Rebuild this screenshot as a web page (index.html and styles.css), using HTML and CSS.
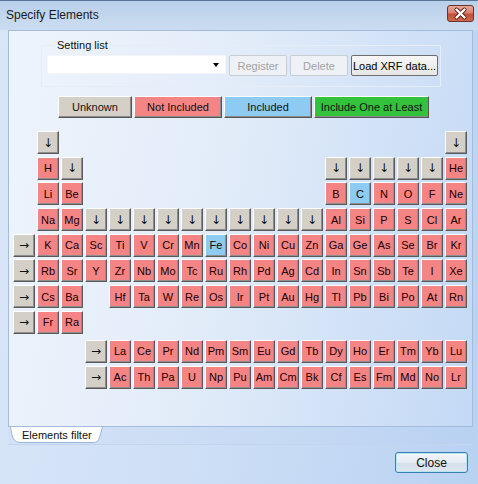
FILE: index.html
```html
<!DOCTYPE html>
<html>
<head>
<meta charset="utf-8">
<link rel="stylesheet" href="styles.css">
</head>
<body>
<div class="window">
  <div class="titlebar">
    <span class="title">Specify Elements</span>
    <span class="xbtn"><svg width="27" height="17" viewBox="0 0 27 17"><path d="M9.5 4.5 L17.5 12.5 M17.5 4.5 L9.5 12.5" stroke="#5a1c14" stroke-width="4" stroke-linecap="round"/><path d="M9.5 4.5 L17.5 12.5 M17.5 4.5 L9.5 12.5" stroke="#ffffff" stroke-width="2.4" stroke-linecap="round"/></svg></span>
  </div>
  <div class="page">
    <fieldset class="group">
      <legend>Setting list</legend>
      <div class="combo"><span class="caret"></span></div>
      <button class="btn dis w58">Register</button>
      <button class="btn dis w58">Delete</button>
      <button class="btn load">Load XRF data...</button>
    </fieldset>
    <div class="legendrow">
      <span class="lg gray l1">Unknown</span>
      <span class="lg red l2">Not Included</span>
      <span class="lg blue l2">Included</span>
      <span class="lg green l3">Include One at Least</span>
    </div>
    <div class="ptable">
      <span class="c gray at1">↓</span><span class="c gray at18">↓</span>

      <span class="c red at1">H</span><span class="c gray">↓</span>
      <span class="c gray at13">↓</span><span class="c gray">↓</span><span class="c gray">↓</span><span class="c gray">↓</span><span class="c gray">↓</span><span class="c red">He</span>

      <span class="c red at1">Li</span><span class="c red">Be</span>
      <span class="c red at13">B</span><span class="c blue">C</span><span class="c red">N</span><span class="c red">O</span><span class="c red">F</span><span class="c red">Ne</span>

      <span class="c red at1">Na</span><span class="c red">Mg</span>
      <span class="c gray">↓</span><span class="c gray">↓</span><span class="c gray">↓</span><span class="c gray">↓</span><span class="c gray">↓</span><span class="c gray">↓</span><span class="c gray">↓</span><span class="c gray">↓</span><span class="c gray">↓</span><span class="c gray">↓</span>
      <span class="c red">Al</span><span class="c red">Si</span><span class="c red">P</span><span class="c red">S</span><span class="c red">Cl</span><span class="c red">Ar</span>

      <span class="c gray at0">→</span><span class="c red">K</span><span class="c red">Ca</span><span class="c red">Sc</span><span class="c red">Ti</span><span class="c red">V</span><span class="c red">Cr</span><span class="c red">Mn</span><span class="c blue">Fe</span><span class="c red">Co</span><span class="c red">Ni</span><span class="c red">Cu</span><span class="c red">Zn</span><span class="c red">Ga</span><span class="c red">Ge</span><span class="c red">As</span><span class="c red">Se</span><span class="c red">Br</span><span class="c red">Kr</span>

      <span class="c gray at0">→</span><span class="c red">Rb</span><span class="c red">Sr</span><span class="c red">Y</span><span class="c red">Zr</span><span class="c red">Nb</span><span class="c red">Mo</span><span class="c red">Tc</span><span class="c red">Ru</span><span class="c red">Rh</span><span class="c red">Pd</span><span class="c red">Ag</span><span class="c red">Cd</span><span class="c red">In</span><span class="c red">Sn</span><span class="c red">Sb</span><span class="c red">Te</span><span class="c red">I</span><span class="c red">Xe</span>

      <span class="c gray at0">→</span><span class="c red">Cs</span><span class="c red">Ba</span><span class="c red at4">Hf</span><span class="c red">Ta</span><span class="c red">W</span><span class="c red">Re</span><span class="c red">Os</span><span class="c red">Ir</span><span class="c red">Pt</span><span class="c red">Au</span><span class="c red">Hg</span><span class="c red">Tl</span><span class="c red">Pb</span><span class="c red">Bi</span><span class="c red">Po</span><span class="c red">At</span><span class="c red">Rn</span>

      <span class="c gray at0">→</span><span class="c red">Fr</span><span class="c red">Ra</span>
    </div>
    <div class="ptable ftable">
      <span class="c gray at3">→</span><span class="c red">La</span><span class="c red">Ce</span><span class="c red">Pr</span><span class="c red">Nd</span><span class="c red">Pm</span><span class="c red">Sm</span><span class="c red">Eu</span><span class="c red">Gd</span><span class="c red">Tb</span><span class="c red">Dy</span><span class="c red">Ho</span><span class="c red">Er</span><span class="c red">Tm</span><span class="c red">Yb</span><span class="c red">Lu</span>
      <span class="c gray at3">→</span><span class="c red">Ac</span><span class="c red">Th</span><span class="c red">Pa</span><span class="c red">U</span><span class="c red">Np</span><span class="c red">Pu</span><span class="c red">Am</span><span class="c red">Cm</span><span class="c red">Bk</span><span class="c red">Cf</span><span class="c red">Es</span><span class="c red">Fm</span><span class="c red">Md</span><span class="c red">No</span><span class="c red">Lr</span>
    </div>
  </div>
  <div class="tabstrip">
    <div class="tab">
      <svg class="tabshape" width="94" height="16" viewBox="0 0 94 16"><path d="M0.5 0 L1.5 6 Q3 15.5 10 15.5 L84 15.5 Q88 15.5 89 12 L92.5 0" fill="#ffffff" stroke="#9fb6d4" stroke-width="1"/></svg>
      <span class="tabtext">Elements filter</span>
    </div>
  </div>
  <div class="footer">
    <button class="close">Close</button>
  </div>
</div>
</body>
</html>
```

FILE: styles.css
```css
html, body {
  margin: 0;
  padding: 0;
}
body {
  width: 478px;
  height: 484px;
  overflow: hidden;
  font-family: "Liberation Sans", Arial, sans-serif;
}
.window {
  width: 478px;
  height: 484px;
  box-sizing: border-box;
  background: linear-gradient(100deg, #d9e6f7 0%, #cfe0f6 45%, #b9d2f2 100%);
  display: flex;
  flex-direction: column;
}
.titlebar {
  height: 30px;
  box-sizing: border-box;
  border-top: 1px solid #5a7596;
  background: linear-gradient(to bottom, #b9cfea 0%, #c4d8ef 60%, #cbdcf1 100%);
  display: flex;
  align-items: flex-start;
  justify-content: space-between;
}
.title {
  font-family: "Liberation Sans", Arial, sans-serif;
  font-size: 12px;
  color: #1a1a1a;
  margin: 7px 0 0 6px;
}
.xbtn {
  width: 27px;
  height: 17px;
  margin: 4px 4px 0 0;
  box-sizing: border-box;
  border: 1px solid #6b3229;
  border-radius: 3px;
  background: linear-gradient(to bottom, #e8a898 0%, #d88170 45%, #c44f38 55%, #cf6a50 100%);
  display: flex;
}
.xbtn svg {
  margin: -1px;
}
.page {
  margin-left: 8px;
  width: 465px;
  height: 397px;
  box-sizing: border-box;
  border: 1px solid #a3bcdc;
  background: linear-gradient(100deg, #eef4fc 0%, #e2ecf9 45%, #c3d9f5 100%);
  padding: 8px 0 0 4px;
  display: flex;
  flex-direction: column;
  align-items: flex-start;
}
.group {
  margin: 0 0 0 28px;
  width: 400px;
  box-sizing: border-box;
  border: 1px solid #e6edf6;
  padding: 4px 0 10px 5px;
  display: flex;
  align-items: flex-start;
  gap: 3px;
  min-width: 0;
}
.group legend {
  font-size: 11px;
  color: #111;
  margin-left: 7px;
  padding: 0 3px;
  line-height: 12px;
}
.combo {
  width: 179px;
  height: 19px;
  box-sizing: border-box;
  background: #ffffff;
  border: 1px solid #f2f5f9;
  position: relative;
}
.caret {
  position: absolute;
  right: 6px;
  top: 7px;
  width: 0;
  height: 0;
  border-left: 3.5px solid transparent;
  border-right: 3.5px solid transparent;
  border-top: 4px solid #000;
}
.btn {
  height: 21px;
  box-sizing: border-box;
  font-family: "Liberation Sans", Arial, sans-serif;
  font-size: 11px;
  padding: 0;
  border-radius: 2px;
  margin: 0;
}
.w58 {
  width: 58px;
}
.dis {
  color: #a3a3a3;
  border: 1px solid #c9ced5;
  background: #eef1f5;
}
.load {
  width: 87px;
  color: #000;
  border: 1px solid #6e6e6e;
  background: linear-gradient(to bottom, #f7f7f7, #e6e6e6);
}
.legendrow {
  margin: 9px 0 0 45px;
  display: flex;
  gap: 2px;
}
.lg {
  height: 22px;
  box-sizing: border-box;
  display: flex;
  align-items: center;
  justify-content: center;
  font-size: 11px;
  color: #111;
  border: 1px solid;
  border-color: #ffffff #555555 #555555 #ffffff;
  box-shadow: inset -1px -1px 0 #8a8a8a;
}
.l1 { width: 74px; }
.l2 { width: 88px; }
.l3 { width: 115px; }
.gray { background: #d4d0c8; }
.red { background: #f58585; }
.blue { background: #8ecbf2; }
.green { background: #33c23b; }
.ptable {
  margin-top: 13px;
  display: grid;
  grid-template-columns: repeat(19, 22px);
  grid-auto-rows: 23px;
  column-gap: 2px;
  row-gap: 2.7px;
}
.ftable {
  margin-top: 6px;
}
.c {
  box-sizing: border-box;
  display: flex;
  align-items: center;
  justify-content: center;
  font-size: 11px;
  color: #1a0000;
  border: 1px solid;
  border-color: #ffffff #5a5a5a #5a5a5a #ffffff;
  box-shadow: inset -1px -1px 0 #8e8e8e;
}
.c.gray {
  color: #111;
  font-family: "DejaVu Sans", sans-serif;
  font-size: 12px;
}
.at0 { grid-column-start: 1; }
.at1 { grid-column-start: 2; }
.at3 { grid-column-start: 4; }
.at4 { grid-column-start: 5; }
.at13 { grid-column-start: 14; }
.at18 { grid-column-start: 19; }
.tabstrip {
  margin-left: 8px;
  width: 465px;
  height: 18px;
  box-sizing: border-box;
  background: linear-gradient(100deg, #d3e2f6 0%, #c7daf4 60%, #b8d1f2 100%);
  border-bottom: 1px solid #c2d5ee;
  padding-left: 2px;
}
.tab {
  position: relative;
  width: 94px;
  height: 16px;
}
.tabshape {
  position: absolute;
  left: 0;
  top: 0;
}
.tabtext {
  position: relative;
  display: block;
  font-family: "Liberation Sans", Arial, sans-serif;
  font-size: 11px;
  color: #111;
  padding: 2px 0 0 12px;
}
.footer {
  display: flex;
  justify-content: flex-end;
  padding: 7px 10px 0 0;
}
.close {
  width: 73px;
  height: 21px;
  box-sizing: border-box;
  border: 1px solid #3b7fae;
  border-radius: 3px;
  background: linear-gradient(to bottom, #f3f7fb 0%, #e4ecf3 50%, #d4dee8 51%, #dfe8f0 100%);
  box-shadow: inset 0 0 0 1px #b7e3f7;
  font-family: "Liberation Sans", Arial, sans-serif;
  font-size: 12px;
  color: #111;
  padding: 0;
}
```
